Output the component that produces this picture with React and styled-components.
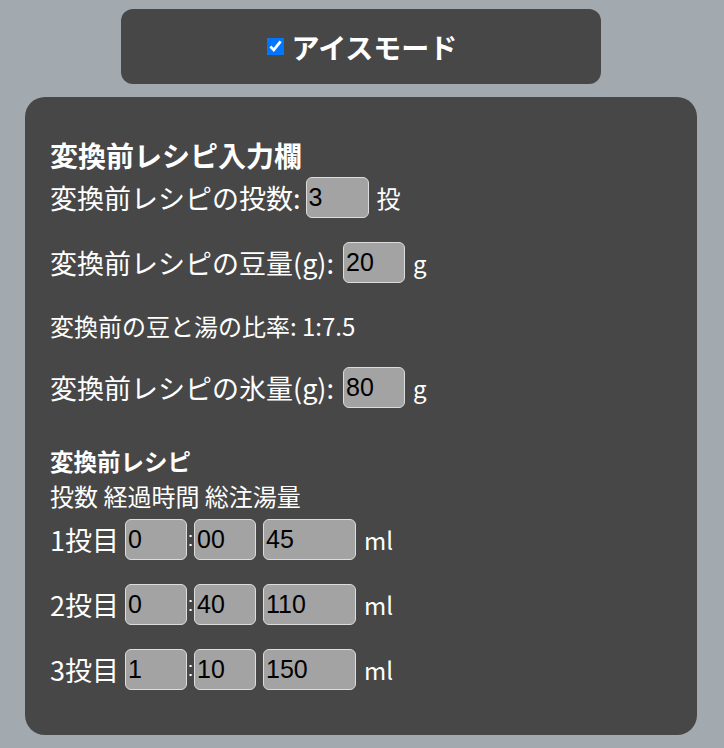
import React from "react";
import styled, { createGlobalStyle } from "styled-components";

const Global = createGlobalStyle`
  html, body {
    margin: 0;
    padding: 0;
    background: #a2a9af;
  }
  body {
    font-family: "Noto Sans CJK JP", "Noto Sans", sans-serif;
    color: #ffffff;
  }
`;

const Page = styled.div`
  width: 724px;
  min-height: 748px;
  padding-top: 9px;
  box-sizing: border-box;
`;

const ModeBar = styled.div`
  width: 480px;
  height: 75px;
  margin: 0 0 0 121px;
  background: #474747;
  border-radius: 12px;
  display: flex;
  align-items: center;
  justify-content: center;
  gap: 8px;
`;

const ModeCheck = styled.input`
  width: 17px;
  height: 17px;
  margin: 0 0 0 2px;
  accent-color: #0075ff;
`;

const ModeLabel = styled.label`
  font-size: 28px;
  font-weight: 700;
  line-height: 1;
  color: #ffffff;
`;

const Panel = styled.section`
  width: 672px;
  margin: 13px 0 0 25px;
  padding: 40px 25px 45px;
  box-sizing: border-box;
  background: #474747;
  border-radius: 20px;
`;

const Heading = styled.h2`
  margin: ${(p) => p.$mt || 0}px 0 0;
  font-size: ${(p) => p.$size}px;
  font-weight: 700;
  line-height: ${(p) => p.$lh}px;
  white-space: nowrap;
`;

const Row = styled.div`
  display: flex;
  align-items: center;
  height: 41px;
  margin-top: ${(p) => p.$mt}px;
  font-size: 27px;
  white-space: nowrap;
`;

const Text = styled.span`
  line-height: 1;
`;

const InfoLine = styled.div`
  margin-top: ${(p) => p.$mt}px;
  font-size: ${(p) => p.$size}px;
  line-height: ${(p) => p.$lh}px;
  white-space: nowrap;
`;

const Box = styled.input`
  width: ${(p) => p.$w}px;
  height: 41px;
  box-sizing: border-box;
  margin: 0 0 0 ${(p) => p.$ml || 0}px;
  padding: 0 2px;
  background: #a3a3a3;
  border: 1px solid #dcdcdc;
  border-radius: 6px;
  color: #000000;
  font-family: "Liberation Sans", Arial, sans-serif;
  font-size: 25px;
  outline: none;
`;

const Colon = styled.span`
  font-family: "Liberation Sans", Arial, sans-serif;
  font-size: 20px;
  color: #ffffff;
  width: 7px;
  text-align: center;
`;

const Unit = styled.span`
  margin-left: 8px;
  font-size: 24px;
  line-height: 1;
`;

const pours = [
  { n: 1, m: "0", s: "00", ml: "45", mt: 5 },
  { n: 2, m: "0", s: "40", ml: "110", mt: 24 },
  { n: 3, m: "1", s: "10", ml: "150", mt: 24 },
];

export default function App() {
  return (
    <Page>
      <Global />
      <ModeBar>
        <ModeCheck type="checkbox" id="ice" defaultChecked />
        <ModeLabel htmlFor="ice">アイスモード</ModeLabel>
      </ModeBar>
      <Panel>
        <Heading $size={28} $lh={36}>変換前レシピ入力欄</Heading>
        <Row $mt={4}>
          <Text>変換前レシピの投数:</Text>
          <Box $w={63} $ml={5} defaultValue="3" readOnly />
          <Unit>投</Unit>
        </Row>
        <Row $mt={24}>
          <Text>変換前レシピの豆量(g):</Text>
          <Box $w={62} $ml={9} defaultValue="20" readOnly />
          <Unit>g</Unit>
        </Row>
        <InfoLine $mt={23} $size={24} $lh={40}>変換前の豆と湯の比率: 1:7.5</InfoLine>
        <Row $mt={21}>
          <Text>変換前レシピの氷量(g):</Text>
          <Box $w={62} $ml={9} defaultValue="80" readOnly />
          <Unit>g</Unit>
        </Row>
        <Heading $size={23.5} $lh={34} $mt={36}>変換前レシピ</Heading>
        <InfoLine $mt={0} $size={24} $lh={36}>投数 経過時間 総注湯量</InfoLine>
        {pours.map((p) => (
          <Row key={p.n} $mt={p.mt}>
            <Text>{p.n}投目</Text>
            <Box $w={62} $ml={6} defaultValue={p.m} readOnly />
            <Colon>:</Colon>
            <Box $w={62} defaultValue={p.s} readOnly />
            <Box $w={93} $ml={7} defaultValue={p.ml} readOnly />
            <Unit>ml</Unit>
          </Row>
        ))}
      </Panel>
    </Page>
  );
}
